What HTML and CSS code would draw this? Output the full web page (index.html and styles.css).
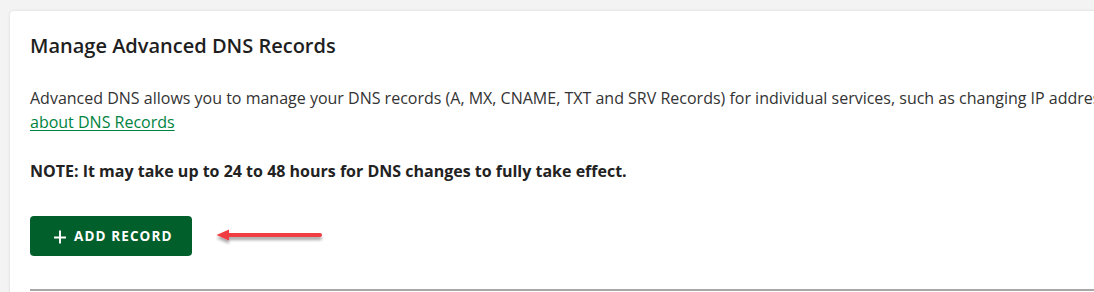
FILE: index.html
```html
<!DOCTYPE html>
<html lang="en">
<head>
<meta charset="utf-8">
<title>Manage Advanced DNS Records</title>
<link rel="stylesheet" href="styles.css">
</head>
<body>
<div class="page">
  <section class="card">
    <h2 class="card-title">Manage Advanced DNS Records</h2>
    <p class="intro">Advanced DNS allows you to manage your DNS records (A, MX, CNAME, TXT and SRV Records) for individual services, such as changing IP addresses for your email. Learn more <a href="#" class="link">about DNS Records</a></p>
    <p class="note">NOTE: It may take up to 24 to 48 hours for DNS changes to fully take effect.</p>
    <div class="actions">
      <button class="btn-add" type="button">
        <svg class="plus" width="12" height="14" viewBox="0 0 12 14" aria-hidden="true"><path d="M6 0.5V13.5M0 7.5H12" stroke="#fff" stroke-width="1.9" fill="none"/></svg>
        <span>ADD RECORD</span>
      </button>
      <svg class="arrow" width="112" height="22" viewBox="0 0 112 22" aria-hidden="true">
        <defs>
          <filter id="sh" x="-10%" y="-50%" width="120%" height="250%">
            <feDropShadow dx="0" dy="3" stdDeviation="1.6" flood-color="#000" flood-opacity="0.35"/>
          </filter>
        </defs>
        <g filter="url(#sh)">
          <path d="M11 6H104a2 2 0 0 1 0 4H11Z" fill="#ef3e42"/>
          <path d="M0.5 8L13 2.6V13.4Z" fill="#ef3e42"/>
        </g>
      </svg>
    </div>
    <div class="table-top"></div>
  </section>
</div>
</body>
</html>
```

FILE: styles.css
```css
html, body {
  margin: 0;
  padding: 0;
  background: #f3f3f3;
  overflow: hidden;
}
body {
  width: 1094px;
  height: 292px;
  font-family: "Open Sans", "Liberation Sans", sans-serif;
  color: #2b2b2b;
}
.page {
  padding: 11px 0 0 10px;
}
.card {
  width: 1345px;
  background: #fff;
  border-radius: 4px;
  box-shadow: 0 0 3px rgba(0,0,0,0.12);
  padding: 23px 20px 0 20px;
  box-sizing: border-box;
  height: 300px;
}
.card-title {
  margin: 0;
  font-size: 20px;
  line-height: 24px;
  font-weight: 600;
  color: #1e1e1e;
}
.intro {
  margin: 28px 0 0 0;
  font-size: 16px;
  line-height: 24px;
  color: #333;
}
.link {
  color: #00833f;
  text-decoration: underline;
  text-underline-offset: 2px;
}
.note {
  margin: 25px 0 0 0;
  font-size: 16px;
  line-height: 24px;
  font-weight: 700;
  color: #222;
}
.actions {
  margin-top: 33px;
  display: flex;
  align-items: center;
}
.btn-add {
  display: flex;
  align-items: center;
  gap: 8px;
  height: 40px;
  width: 162px;
  padding: 0 0 0 24px;
  border: 0;
  border-radius: 4px;
  background: #015f2b;
  color: #fff;
  font-family: "Open Sans", "Liberation Sans", sans-serif;
  font-weight: 700;
  font-size: 13.5px;
  letter-spacing: 1.1px;
}
.plus {
  display: block;
  margin-top: 1px;
}
.arrow {
  display: block;
  margin-left: 24px;
  margin-top: 4px;
}
.table-top {
  margin-top: 33px;
  border-top: 2px solid #a8a8a8;
}
```
